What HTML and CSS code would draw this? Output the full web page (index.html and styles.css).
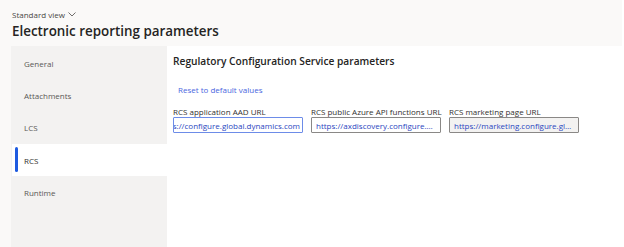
FILE: index.html
```html
<!DOCTYPE html>
<html lang="en">
<head>
  <meta charset="UTF-8">
  <title>Electronic reporting parameters</title>
  <link rel="stylesheet" href="styles.css">
</head>
<body>
  <div class="page">
    <div class="header">
      <div class="view-switch">Standard view
        <svg class="chevron" width="8" height="5" viewBox="0 0 8 5"><path d="M0.5 0.5 L4 4 L7.5 0.5" fill="none" stroke="#605e5c" stroke-width="0.9"/></svg>
      </div>
      <h1>Electronic reporting parameters</h1>
    </div>

    <div class="main">
      <ul class="nav">
        <li>General</li>
        <li>Attachments</li>
        <li>LCS</li>
        <li class="active">RCS</li>
        <li>Runtime</li>
      </ul>

      <div class="content">
        <h2>Regulatory Configuration Service parameters</h2>
        <a class="reset-link" href="#">Reset to default values</a>

        <div class="fields">
          <div class="field">
            <label>RCS application AAD URL</label>
            <div class="input focused"><span>https://configure.global.dynamics.com</span></div>
          </div>
          <div class="field">
            <label>RCS public Azure API functions URL</label>
            <div class="input"><span>https://axdiscovery.configure.global.dynamics.com</span></div>
          </div>
          <div class="field">
            <label>RCS marketing page URL</label>
            <div class="input readonly"><span>https://marketing.configure.global.dynamics.com</span></div>
          </div>
        </div>
      </div>
    </div>
  </div>
</body>
</html>
```

FILE: styles.css
```css
* {
  margin: 0;
  padding: 0;
  box-sizing: border-box;
}

body {
  font-family: "Open Sans", "Noto Sans", Arial, sans-serif;
  background: #ffffff;
  color: #323130;
  width: 624px;
  height: 247px;
  overflow: hidden;
}

.page {
  width: 622px;
  height: 247px;
  display: grid;
  grid-template-rows: 46px 201px;
}

.header {
  background: #faf9f8;
  padding: 8px 12px 0;
}

.view-switch {
  font-size: 8px;
  color: #484644;
  display: flex;
  align-items: center;
  gap: 3px;
  height: 12px;
}

h1 {
  font-size: 13.4px;
  font-weight: 600;
  color: #252423;
  margin-top: 2px;
}

.main {
  display: grid;
  grid-template-columns: 156px 1fr;
  background: #faf9f8;
  padding-left: 11px;
}

.nav {
  list-style: none;
  background: #f3f2f1;
  padding-top: 1px;
}

.nav li {
  height: 32.3px;
  display: flex;
  align-items: center;
  padding-left: 13px;
  font-size: 8px;
  color: #5a5856;
  position: relative;
}

.nav li.active {
  background: #ffffff;
  margin-left: 1px;
  padding-left: 12px;
  color: #323130;
}

.nav li.active::before {
  content: "";
  position: absolute;
  left: 3px;
  top: 3px;
  bottom: 4px;
  width: 3px;
  border-radius: 2px;
  background: #1e5be0;
}

.content {
  background: #ffffff;
  padding: 8px 0 0 6px;
}

h2 {
  font-size: 10.2px;
  font-weight: 600;
  color: #252423;
  height: 16px;
}

.reset-link {
  display: block;
  margin: 14px 0 0 5px;
  font-size: 8px;
  color: #4a66e0;
  text-decoration: none;
  height: 12px;
}

.fields {
  display: flex;
  gap: 8px;
  margin-top: 10px;
}

.field {
  width: 130px;
  display: flex;
  flex-direction: column;
}

.field label {
  font-size: 8px;
  color: #323130;
  height: 11px;
  line-height: 11px;
  white-space: nowrap;
}

.input {
  height: 16px;
  border: 1px solid #8a8886;
  border-radius: 1px;
  display: flex;
  align-items: center;
  padding: 0 4px;
  font-size: 8px;
  color: #2a46c0;
  overflow: hidden;
}

.input span {
  white-space: nowrap;
  overflow: hidden;
  text-overflow: ellipsis;
}

.input.focused {
  border-color: #6d8ce8;
  padding: 0 2px;
  justify-content: flex-end;
}

.input.focused span {
  overflow: visible;
  flex-shrink: 0;
}

.input.readonly {
  background: #f3f2f1;
}
```
